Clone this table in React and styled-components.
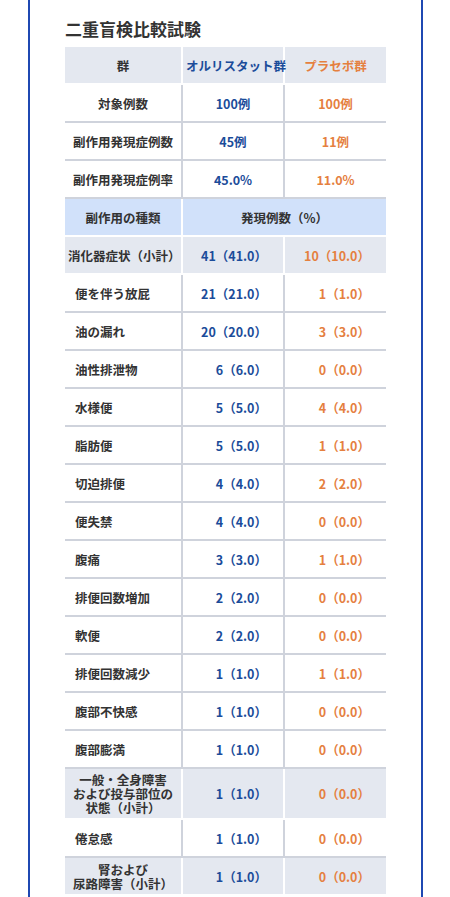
import React from "react";
import styled, { createGlobalStyle } from "styled-components";

const BLUE = "#1b4c9a";
const ORANGE = "#e5803f";

const stats = [
  { label: "対象例数", a: "100例", b: "100例" },
  { label: "副作用発現症例数", a: "45例", b: "11例" },
  { label: "副作用発現症例率", a: "45.0%", b: "11.0%" },
];

const effects = [
  { label: "消化器症状（小計）", a: "41（41.0）", b: "10（10.0）", sub: true },
  { label: "便を伴う放屁", a: "21（21.0）", b: "1（1.0）" },
  { label: "油の漏れ", a: "20（20.0）", b: "3（3.0）" },
  { label: "油性排泄物", a: "6（6.0）", b: "0（0.0）" },
  { label: "水様便", a: "5（5.0）", b: "4（4.0）" },
  { label: "脂肪便", a: "5（5.0）", b: "1（1.0）" },
  { label: "切迫排便", a: "4（4.0）", b: "2（2.0）" },
  { label: "便失禁", a: "4（4.0）", b: "0（0.0）" },
  { label: "腹痛", a: "3（3.0）", b: "1（1.0）" },
  { label: "排便回数増加", a: "2（2.0）", b: "0（0.0）" },
  { label: "軟便", a: "2（2.0）", b: "0（0.0）" },
  { label: "排便回数減少", a: "1（1.0）", b: "1（1.0）" },
  { label: "腹部不快感", a: "1（1.0）", b: "0（0.0）" },
  { label: "腹部膨満", a: "1（1.0）", b: "0（0.0）" },
  { label: ["一般・全身障害", "および投与部位の", "状態（小計）"], a: "1（1.0）", b: "0（0.0）", sub: true },
  { label: "倦怠感", a: "1（1.0）", b: "0（0.0）" },
  { label: ["腎および", "尿路障害（小計）"], a: "1（1.0）", b: "0（0.0）", sub: true },
];

export default function App() {
  return (
    <>
      <GlobalStyle />
      <Panel>
        <Title>二重盲検比較試験</Title>
        <Table>
          <colgroup>
            <col style={{ width: 116 }} />
            <col style={{ width: 102 }} />
            <col style={{ width: 103 }} />
          </colgroup>
          <tbody>
            <tr>
              <Cell $shade="gray" $align="center">群</Cell>
              <Cell $shade="gray" $align="center" $color={BLUE} $divider>オルリスタット群</Cell>
              <Cell $shade="gray" $align="center" $color={ORANGE} $divider>プラセボ群</Cell>
            </tr>
            {stats.map((row) => (
              <tr key={row.label}>
                <Cell $align="center">{row.label}</Cell>
                <Cell $align="center" $color={BLUE} $divider>{row.a}</Cell>
                <Cell $align="center" $color={ORANGE} $divider>{row.b}</Cell>
              </tr>
            ))}
            <tr>
              <Cell $shade="blue" $align="center">副作用の種類</Cell>
              <Cell $shade="blue" $align="center" $divider colSpan={2}>発現例数（%）</Cell>
            </tr>
            {effects.map((row, i) => (
              <tr key={i}>
                <Cell $shade={row.sub ? "gray" : undefined} $align={row.sub ? "center" : "left"}>
                  {Array.isArray(row.label)
                    ? row.label.map((line) => <Line key={line}>{line}</Line>)
                    : row.label}
                </Cell>
                <Cell $shade={row.sub ? "gray" : undefined} $align="right" $color={BLUE} $divider>{row.a}</Cell>
                <Cell $shade={row.sub ? "gray" : undefined} $align="right" $color={ORANGE} $divider>{row.b}</Cell>
              </tr>
            ))}
          </tbody>
        </Table>
      </Panel>
    </>
  );
}

const GlobalStyle = createGlobalStyle`
  body {
    margin: 0;
    background: #fff;
    font-family: "Noto Sans CJK JP", "Noto Sans", sans-serif;
  }
`;

const Panel = styled.div`
  margin: 0 27px 0 28px;
  min-height: 920px;
  border-left: 2px solid #1f48b2;
  border-right: 2px solid #1f48b2;
  padding: 17px 35px 0;
  box-sizing: border-box;
`;

const Title = styled.h2`
  margin: 0 0 6px;
  font-size: 17px;
  line-height: 24px;
  font-weight: 700;
  color: #333;
`;

const Table = styled.table`
  width: 321px;
  table-layout: fixed;
  border-collapse: separate;
  border-spacing: 0;
`;

const backgrounds = { gray: "#e4e8f0", blue: "#d1e1fa" };

const Cell = styled.td`
  box-sizing: border-box;
  height: 38px;
  padding: 4px ${(p) => (p.$align === "right" ? "16px" : p.$align === "left" ? "0" : "3px")} 3px
    ${(p) => (p.$align === "left" ? "10px" : "3px")};
  background: ${(p) => backgrounds[p.$shade] || "#fff"};
  border-bottom: 2px solid ${(p) => (p.$shade ? "#fff" : "#cfd3dc")};
  border-left: ${(p) => (p.$divider ? `2px solid ${p.$shade ? "#fff" : "#cfd3dc"}` : "none")};
  text-align: ${(p) => p.$align};
  vertical-align: middle;
  font-size: 12.5px;
  line-height: 14px;
  font-weight: 700;
  color: ${(p) => p.$color || "#333"};
  white-space: nowrap;
`;

const Line = styled.span`
  display: block;
`;
